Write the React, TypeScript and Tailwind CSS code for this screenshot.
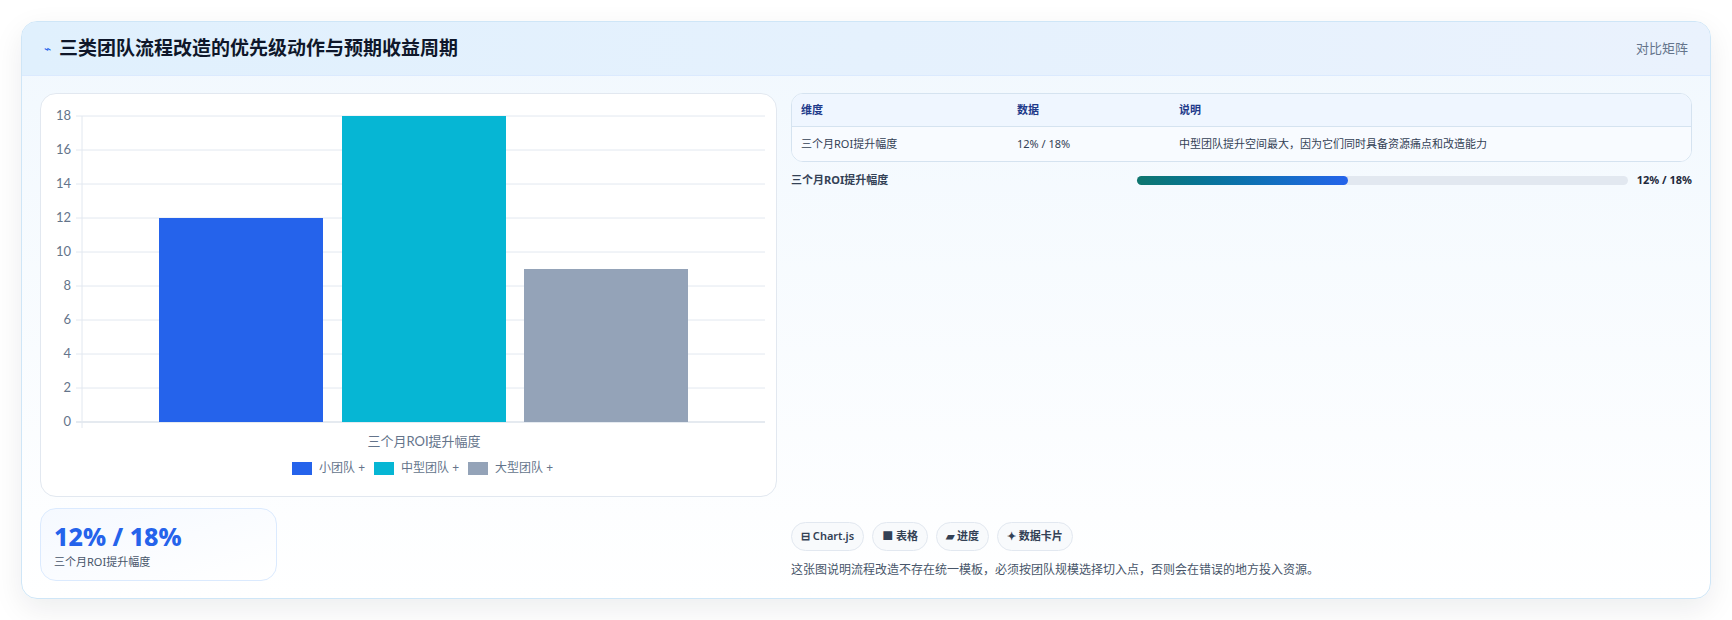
const FONT = { fontFamily: '"Noto Sans", "Noto Sans CJK SC", sans-serif' };

const ticks = [0, 2, 4, 6, 8, 10, 12, 14, 16, 18];
const bars = [
  { label: '小团队', value: 12, color: '#2563eb' },
  { label: '中型团队', value: 18, color: '#06b6d4' },
  { label: '大型团队', value: 9, color: '#94a3b8' },
];

function BarChart() {
  const top = 22;
  const bottom = 328;
  const left = 41;
  const right = 724;
  const y = (v: number) => bottom - ((bottom - top) * v) / 18;
  const xs = [118, 301, 483];
  return (
    <svg width="737" height="403" className="block">
      {ticks.map((t) => (
        <g key={t}>
          <line x1={left - 6} x2={right} y1={y(t)} y2={y(t)} stroke={t === 0 ? '#cbd5e1' : '#e2e8f0'} />
          <text x={left - 11} y={y(t) + 4} textAnchor="end" fontSize="13" fill="#64748b" fontFamily="Lato, sans-serif">
            {t}
          </text>
        </g>
      ))}
      <line x1={left} x2={left} y1={top} y2={bottom + 6} stroke="#e2e8f0" />
      {bars.map((b, i) => (
        <rect key={b.label} x={xs[i]} y={y(b.value)} width={164} height={bottom - y(b.value)} fill={b.color} />
      ))}
      <text x={383} y={352} textAnchor="middle" fontSize="13" fill="#64748b" fontFamily='Lato, "Noto Sans CJK SC", sans-serif'>
        三个月ROI提升幅度
      </text>
    </svg>
  );
}

export default function App() {
  return (
    <div className="min-h-screen bg-white p-[21px]" style={FONT}>
      <div className="overflow-hidden rounded-2xl border border-[#cfe6f7] bg-gradient-to-b from-[#f1f8fe] to-white shadow-[0_10px_30px_rgba(15,23,42,0.08)]">
        <div className="flex h-[54px] items-center justify-between border-b border-[#dbeafe] bg-gradient-to-r from-[#e0f0fd] to-[#eaf2fd] px-[22px]">
          <div className="flex items-center gap-2">
            <span className="text-[12px] text-[#2563eb]">⌁</span>
            <h2 className="text-[19px] font-bold text-[#0f172a]">三类团队流程改造的优先级动作与预期收益周期</h2>
          </div>
          <span className="text-[13px] text-[#64748b]">对比矩阵</span>
        </div>
        <div className="grid grid-cols-[737px_1fr] gap-[14px] px-[18px] pt-[17px] pb-[17px]">
          <div className="flex flex-col gap-[11px]">
            <div className="relative h-[404px] rounded-2xl border border-[#e2e8f0] bg-white">
              <BarChart />
              <div className="absolute left-0 right-0 top-[365px] flex justify-center gap-[9px] pl-[28px] text-[12px] text-[#64748b]">
                {bars.map((b) => (
                  <span key={b.label} className="flex items-center gap-[7px]">
                    <span className="inline-block h-[13px] w-[20px]" style={{ background: b.color }} />
                    {b.label} +
                  </span>
                ))}
              </div>
            </div>
            <div className="w-[237px] rounded-2xl border border-[#dbeafe] bg-gradient-to-br from-[#f5f9ff] to-white px-[13px] py-[9px]">
              <div className="text-[25px] font-extrabold leading-9 text-[#2563eb]">12% / 18%</div>
              <div className="text-[11px] text-[#475569]">三个月ROI提升幅度</div>
            </div>
          </div>
          <div className="flex flex-col">
            <div className="overflow-hidden rounded-xl border border-[#d5e3f0] bg-white text-[11px]">
              <div className="flex h-[33px] items-center border-b border-[#d5e3f0] bg-[#eff6ff] px-[9px] font-bold text-[#1e3a8a]">
                <span className="w-[216px]">维度</span>
                <span className="w-[162px]">数据</span>
                <span>说明</span>
              </div>
              <div className="flex h-[34px] items-center bg-[#f8fbff] px-[9px] text-[#334155]">
                <span className="w-[216px]">三个月ROI提升幅度</span>
                <span className="w-[162px]">12% / 18%</span>
                <span>中型团队提升空间最大，因为它们同时具备资源痛点和改造能力</span>
              </div>
            </div>
            <div className="mt-[10px] flex items-center text-[11px] font-bold text-[#334155]">
              <span className="w-[346px]">三个月ROI提升幅度</span>
              <div className="h-[9px] flex-1 rounded-full bg-[#e2e8f0]">
                <div className="h-full w-[43%] rounded-full bg-gradient-to-r from-[#0f766e] to-[#2563eb]" />
              </div>
              <span className="ml-[9px] text-[#1e293b]">12% / 18%</span>
            </div>
            <div className="flex-1" />
            <div className="flex gap-[8px] text-[11px] font-semibold text-[#334155]">
              {['⊟ Chart.js', '■ 表格', '▰ 进度', '✦ 数据卡片'].map((c) => (
                <span key={c} className="rounded-full border border-[#e2e8f0] bg-[#f8fafc] px-[9px] py-[5px]">
                  {c}
                </span>
              ))}
            </div>
            <p className="mt-[10px] mb-[2px] text-[12px] text-[#475569]">
              这张图说明流程改造不存在统一模板，必须按团队规模选择切入点，否则会在错误的地方投入资源。
            </p>
          </div>
        </div>
      </div>
    </div>
  );
}
